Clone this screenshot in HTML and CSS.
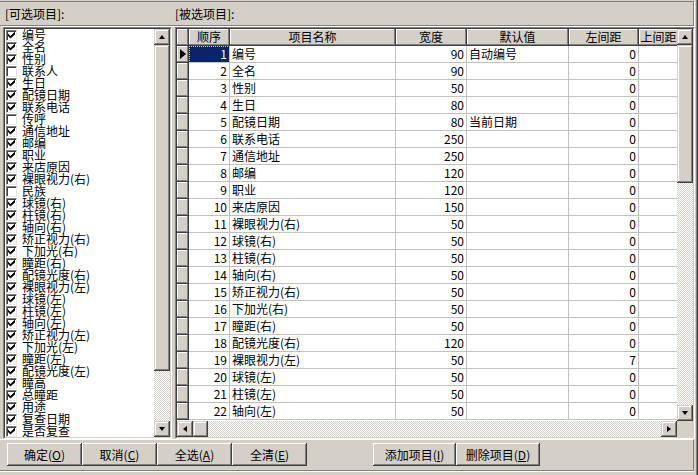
FILE: index.html
```html
<!DOCTYPE html>
<html lang="zh-CN">
<head>
<meta charset="utf-8">
<title>项目设置</title>
<link rel="stylesheet" href="styles.css">
</head>
<body>
<div class="win">
  <div class="top">
    <div class="lbl lbl-left">[可选项目]:</div>
    <div class="lbl">[被选项目]:</div>
  </div>
  <div class="main">
    <div class="sunken listbox">
      <div class="sunken-in lb-in">
        <div class="list">
          <div class="item"><i class="cb on"></i>编号</div>
          <div class="item"><i class="cb on"></i>全名</div>
          <div class="item"><i class="cb on"></i>性别</div>
          <div class="item"><i class="cb"></i>联系人</div>
          <div class="item"><i class="cb on"></i>生日</div>
          <div class="item"><i class="cb on"></i>配镜日期</div>
          <div class="item"><i class="cb on"></i>联系电话</div>
          <div class="item"><i class="cb"></i>传呼</div>
          <div class="item"><i class="cb on"></i>通信地址</div>
          <div class="item"><i class="cb on"></i>邮编</div>
          <div class="item"><i class="cb on"></i>职业</div>
          <div class="item"><i class="cb on"></i>来店原因</div>
          <div class="item"><i class="cb on"></i>裸眼视力(右)</div>
          <div class="item"><i class="cb"></i>民族</div>
          <div class="item"><i class="cb on"></i>球镜(右)</div>
          <div class="item"><i class="cb on"></i>柱镜(右)</div>
          <div class="item"><i class="cb on"></i>轴向(右)</div>
          <div class="item"><i class="cb on"></i>矫正视力(右)</div>
          <div class="item"><i class="cb on"></i>下加光(右)</div>
          <div class="item"><i class="cb on"></i>瞳距(右)</div>
          <div class="item"><i class="cb on"></i>配镜光度(右)</div>
          <div class="item"><i class="cb on"></i>裸眼视力(左)</div>
          <div class="item"><i class="cb on"></i>球镜(左)</div>
          <div class="item"><i class="cb on"></i>柱镜(左)</div>
          <div class="item"><i class="cb on"></i>轴向(左)</div>
          <div class="item"><i class="cb on"></i>矫正视力(左)</div>
          <div class="item"><i class="cb on"></i>下加光(左)</div>
          <div class="item"><i class="cb on"></i>瞳距(左)</div>
          <div class="item"><i class="cb on"></i>配镜光度(左)</div>
          <div class="item"><i class="cb on"></i>瞳高</div>
          <div class="item"><i class="cb on"></i>总瞳距</div>
          <div class="item"><i class="cb on"></i>用途</div>
          <div class="item"><i class="cb on"></i>复查日期</div>
          <div class="item"><i class="cb on"></i>是否复查</div>
        </div>
        <div class="vsb">
          <div class="sbb"><i class="ar up"></i></div>
          <div class="thumb lthumb"></div>
          <div class="track"></div>
          <div class="sbb"><i class="ar down"></i></div>
        </div>
      </div>
    </div>
    <div class="sunken grid">
      <div class="sunken-in grid-in">
        <div class="grid-top">
          <div class="view">
            <div class="row head">
              <div class="c ind"></div><div class="c c1">顺序</div><div class="c c2">项目名称</div><div class="c c3">宽度</div><div class="c c4">默认值</div><div class="c c5">左间距</div><div class="c c6">上间距</div>
            </div>
            <div class="row"><div class="c ind"><i class="cur"></i></div><div class="c c1 r sel">1</div><div class="c c2">编号</div><div class="c c3 r">90</div><div class="c c4">自动编号</div><div class="c c5 r">0</div><div class="c c6"></div></div>
            <div class="row"><div class="c ind"></div><div class="c c1 r">2</div><div class="c c2">全名</div><div class="c c3 r">90</div><div class="c c4"></div><div class="c c5 r">0</div><div class="c c6"></div></div>
            <div class="row"><div class="c ind"></div><div class="c c1 r">3</div><div class="c c2">性别</div><div class="c c3 r">50</div><div class="c c4"></div><div class="c c5 r">0</div><div class="c c6"></div></div>
            <div class="row"><div class="c ind"></div><div class="c c1 r">4</div><div class="c c2">生日</div><div class="c c3 r">80</div><div class="c c4"></div><div class="c c5 r">0</div><div class="c c6"></div></div>
            <div class="row"><div class="c ind"></div><div class="c c1 r">5</div><div class="c c2">配镜日期</div><div class="c c3 r">80</div><div class="c c4">当前日期</div><div class="c c5 r">0</div><div class="c c6"></div></div>
            <div class="row"><div class="c ind"></div><div class="c c1 r">6</div><div class="c c2">联系电话</div><div class="c c3 r">250</div><div class="c c4"></div><div class="c c5 r">0</div><div class="c c6"></div></div>
            <div class="row"><div class="c ind"></div><div class="c c1 r">7</div><div class="c c2">通信地址</div><div class="c c3 r">250</div><div class="c c4"></div><div class="c c5 r">0</div><div class="c c6"></div></div>
            <div class="row"><div class="c ind"></div><div class="c c1 r">8</div><div class="c c2">邮编</div><div class="c c3 r">120</div><div class="c c4"></div><div class="c c5 r">0</div><div class="c c6"></div></div>
            <div class="row"><div class="c ind"></div><div class="c c1 r">9</div><div class="c c2">职业</div><div class="c c3 r">120</div><div class="c c4"></div><div class="c c5 r">0</div><div class="c c6"></div></div>
            <div class="row"><div class="c ind"></div><div class="c c1 r">10</div><div class="c c2">来店原因</div><div class="c c3 r">150</div><div class="c c4"></div><div class="c c5 r">0</div><div class="c c6"></div></div>
            <div class="row"><div class="c ind"></div><div class="c c1 r">11</div><div class="c c2">裸眼视力(右)</div><div class="c c3 r">50</div><div class="c c4"></div><div class="c c5 r">0</div><div class="c c6"></div></div>
            <div class="row"><div class="c ind"></div><div class="c c1 r">12</div><div class="c c2">球镜(右)</div><div class="c c3 r">50</div><div class="c c4"></div><div class="c c5 r">0</div><div class="c c6"></div></div>
            <div class="row"><div class="c ind"></div><div class="c c1 r">13</div><div class="c c2">柱镜(右)</div><div class="c c3 r">50</div><div class="c c4"></div><div class="c c5 r">0</div><div class="c c6"></div></div>
            <div class="row"><div class="c ind"></div><div class="c c1 r">14</div><div class="c c2">轴向(右)</div><div class="c c3 r">50</div><div class="c c4"></div><div class="c c5 r">0</div><div class="c c6"></div></div>
            <div class="row"><div class="c ind"></div><div class="c c1 r">15</div><div class="c c2">矫正视力(右)</div><div class="c c3 r">50</div><div class="c c4"></div><div class="c c5 r">0</div><div class="c c6"></div></div>
            <div class="row"><div class="c ind"></div><div class="c c1 r">16</div><div class="c c2">下加光(右)</div><div class="c c3 r">50</div><div class="c c4"></div><div class="c c5 r">0</div><div class="c c6"></div></div>
            <div class="row"><div class="c ind"></div><div class="c c1 r">17</div><div class="c c2">瞳距(右)</div><div class="c c3 r">50</div><div class="c c4"></div><div class="c c5 r">0</div><div class="c c6"></div></div>
            <div class="row"><div class="c ind"></div><div class="c c1 r">18</div><div class="c c2">配镜光度(右)</div><div class="c c3 r">120</div><div class="c c4"></div><div class="c c5 r">0</div><div class="c c6"></div></div>
            <div class="row"><div class="c ind"></div><div class="c c1 r">19</div><div class="c c2">裸眼视力(左)</div><div class="c c3 r">50</div><div class="c c4"></div><div class="c c5 r">7</div><div class="c c6"></div></div>
            <div class="row"><div class="c ind"></div><div class="c c1 r">20</div><div class="c c2">球镜(左)</div><div class="c c3 r">50</div><div class="c c4"></div><div class="c c5 r">0</div><div class="c c6"></div></div>
            <div class="row"><div class="c ind"></div><div class="c c1 r">21</div><div class="c c2">柱镜(左)</div><div class="c c3 r">50</div><div class="c c4"></div><div class="c c5 r">0</div><div class="c c6"></div></div>
            <div class="row"><div class="c ind"></div><div class="c c1 r">22</div><div class="c c2">轴向(左)</div><div class="c c3 r">50</div><div class="c c4"></div><div class="c c5 r">0</div><div class="c c6"></div></div>
          </div>
          <div class="vsb">
            <div class="sbb"><i class="ar up"></i></div>
            <div class="thumb gthumb"></div>
            <div class="track"></div>
            <div class="sbb"><i class="ar down"></i></div>
          </div>
        </div>
        <div class="grid-bot">
          <div class="hsb">
            <div class="sbb"><i class="ar left"></i></div>
            <div class="thumb hthumb"></div>
            <div class="track"></div>
            <div class="sbb"><i class="ar right"></i></div>
          </div>
          <div class="corner"></div>
        </div>
      </div>
    </div>
  </div>
  <div class="bottom">
    <button class="btn w75">确定(<u>O</u>)</button>
    <button class="btn w75">取消(<u>C</u>)</button>
    <button class="btn w75">全选(<u>A</u>)</button>
    <button class="btn w75">全清(<u>E</u>)</button>
    <div class="btn-gap"></div>
    <button class="btn w83">添加项目(<u>I</u>)</button>
    <button class="btn w84">删除项目(<u>D</u>)</button>
  </div>
</div>
</body>
</html>
```
FILE: styles.css
```css
html, body {
  margin: 0;
  padding: 0;
}
body {
  width: 698px;
  height: 475px;
  overflow: hidden;
  background: #d4d0c8;
  font-family: "Noto Sans CJK SC", "Noto Sans", sans-serif;
  font-size: 12px;
  color: #000;
}
.win {
  width: 698px;
  height: 475px;
  box-sizing: border-box;
  display: flex;
  flex-direction: column;
  border-right: 1px solid #404040;
  box-shadow: inset -1px 0 #808080;
}

/* top label panel */
.top {
  height: 25px;
  box-sizing: border-box;
  margin: 1px 3px 1px 0;
  border-top: 1px solid #808080;
  border-right: 1px solid #808080;
  border-bottom: 1px solid #808080;
  box-shadow: 1px 1px 0 #fff;
  display: flex;
  align-items: center;
}
.lbl {
  line-height: 14px;
  white-space: nowrap;
}
.lbl-left {
  width: 175px;
  padding-left: 5px;
  box-sizing: border-box;
}

/* main area */
.main {
  height: 412px;
  display: flex;
  padding-left: 3px;
  gap: 3px;
}
.sunken {
  box-sizing: border-box;
  border: 1px solid;
  border-color: #808080 #fff #fff #808080;
  height: 412px;
}
.sunken-in {
  box-sizing: border-box;
  height: 100%;
  border: 1px solid;
  border-color: #404040 #d4d0c8 #d4d0c8 #404040;
}
.listbox {
  width: 169px;
}
.lb-in {
  display: flex;
}
.list {
  flex: 1;
  background: #fff;
  overflow: hidden;
}
.item {
  height: 12px;
  line-height: 12px;
  display: flex;
  align-items: center;
  gap: 5px;
  padding-left: 1px;
  white-space: nowrap;
}
.cb {
  flex: none;
  position: relative;
  width: 11px;
  height: 11px;
  box-sizing: border-box;
  background: #fff;
  border: 1px solid;
  border-color: #808080 #e8e6e2 #e8e6e2 #808080;
  box-shadow: inset 1px 1px #404040;
}
.cb.on::after {
  content: "";
  position: absolute;
  left: 1px;
  top: 1px;
  width: 7px;
  height: 7px;
  background: #000;
  clip-path: polygon(0 2px, 2.5px 4.5px, 7px 0, 7px 3px, 2.5px 7px, 0 4.5px);
}

/* scrollbars */
.vsb {
  width: 16px;
  flex: none;
  display: flex;
  flex-direction: column;
}
.hsb {
  flex: 1;
  display: flex;
}
.sbb, .thumb {
  flex: none;
  background: #d4d0c8;
  box-shadow: inset -1px -1px #404040, inset 1px 1px #d4d0c8, inset -2px -2px #808080, inset 2px 2px #fff;
}
.sbb {
  width: 16px;
  height: 16px;
  display: flex;
  align-items: center;
  justify-content: center;
}
.lthumb { height: 326px; }
.gthumb { height: 138px; }
.hthumb { width: 15px; }
.track {
  flex: 1;
  background-color: #eae8e4;
  background-image: repeating-conic-gradient(#d4d0c8 0 25%, #fff 0 50%);
  background-size: 2px 2px;
}
.ar {
  display: block;
  width: 0;
  height: 0;
  border-style: solid;
}
.ar.up { border-width: 0 3.5px 4px; border-color: transparent transparent #000; margin-top: -1px; }
.ar.down { border-width: 4px 3.5px 0; border-color: #000 transparent transparent; }
.ar.left { border-width: 3.5px 4px 3.5px 0; border-color: transparent #000 transparent transparent; margin-left: -1px; }
.ar.right { border-width: 3.5px 0 3.5px 4px; border-color: transparent transparent transparent #000; }

/* grid */
.grid {
  width: 520px;
}
.grid-in {
  display: flex;
  flex-direction: column;
}
.grid-top {
  flex: 1;
  min-height: 0;
  display: flex;
}
.view {
  flex: 1;
  overflow: hidden;
  background: #fff;
}
.grid-bot {
  height: 16px;
  flex: none;
  display: flex;
}
.corner {
  width: 16px;
  background: #d4d0c8;
}
.row {
  display: flex;
  height: 17px;
  width: 502px;
}
.c {
  flex: none;
  box-sizing: border-box;
  height: 17px;
  line-height: 16px;
  padding: 0 2px;
  border-right: 1px solid #c0c0c0;
  border-bottom: 1px solid #c0c0c0;
  white-space: nowrap;
  overflow: hidden;
}
.r { text-align: right; }
.ind { width: 12px; padding: 0; }
.c1 { width: 41px; }
.c2 { width: 166px; }
.c3 { width: 71px; }
.c4 { width: 102px; }
.c5 { width: 70px; }
.c6 { width: 40px; }
.head .c, .c.ind {
  background: #d4d0c8;
  border-right-color: #404040;
  border-bottom-color: #404040;
  box-shadow: inset -1px -1px #808080, inset 1px 1px #fff;
}
.head .c {
  text-align: center;
  padding: 0;
}
.sel {
  background: #0a246a;
  color: #fff;
  outline: 1px dotted #c8c8c8;
  outline-offset: -1px;
}
.ind {
  display: flex;
  align-items: center;
}
.cur {
  display: block;
  width: 0;
  height: 0;
  margin-left: 3px;
  border-style: solid;
  border-width: 5px 0 5px 6px;
  border-color: transparent transparent transparent #000;
}

/* bottom buttons */
.bottom {
  height: 32px;
  box-sizing: border-box;
  margin-right: 3px;
  border-top: 1px solid #fff;
  border-bottom: 1px solid #808080;
  border-right: 1px solid #808080;
  box-shadow: 0 1px 0 #fff;
  padding: 3px 0 0 7px;
  display: flex;
  align-items: flex-start;
}
.btn {
  flex: none;
  height: 23px;
  margin: 0;
  padding: 0;
  border: none;
  background: #d4d0c8;
  font-family: "Noto Sans CJK SC", "Noto Sans", sans-serif;
  font-size: 12px;
  color: #000;
  line-height: 23px;
  text-align: center;
  box-shadow: inset -1px -1px #404040, inset 1px 1px #fff, inset -2px -2px #808080, inset 2px 2px #d4d0c8;
}
.btn u { text-underline-offset: 1px; }
.w75 { width: 75px; }
.w83 { width: 83px; }
.w84 { width: 84px; }
.btn-gap { width: 66px; flex: none; }
```
